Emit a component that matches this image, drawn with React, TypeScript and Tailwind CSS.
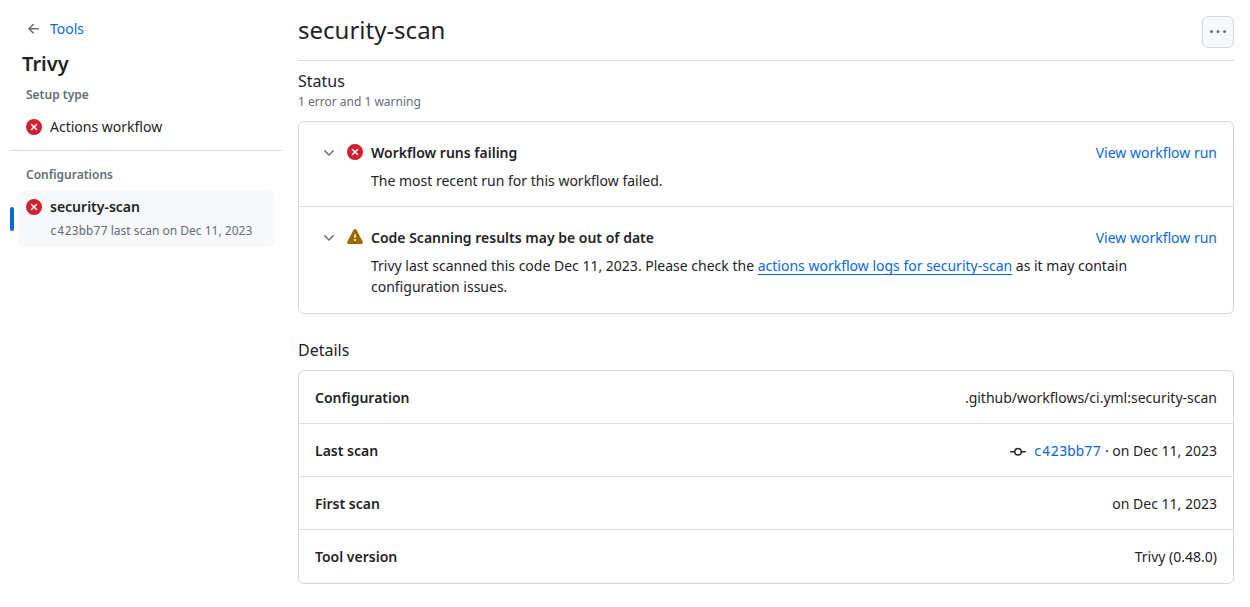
import type { ReactNode } from "react";

const paths = {
  arrowLeft:
    "M7.78 12.53a.75.75 0 0 1-1.06 0L2.47 8.28a.75.75 0 0 1 0-1.06l4.25-4.25a.751.751 0 0 1 1.042.018.751.751 0 0 1 .018 1.042L4.81 7h7.44a.75.75 0 0 1 0 1.5H4.81l2.97 2.97a.75.75 0 0 1 0 1.06Z",
  xCircleFill:
    "M2.343 13.657A8 8 0 1 1 13.658 2.343 8 8 0 0 1 2.343 13.657ZM6.03 4.97a.751.751 0 0 0-1.042.018.751.751 0 0 0-.018 1.042L6.94 8 4.97 9.97a.749.749 0 0 0 .326 1.275.749.749 0 0 0 .734-.215L8 9.06l1.97 1.97a.749.749 0 0 0 1.275-.326.749.749 0 0 0-.215-.734L9.06 8l1.97-1.97a.749.749 0 0 0-.326-1.275.749.749 0 0 0-.734.215L8 6.94Z",
  alertFill:
    "M6.457 1.047c.659-1.234 2.427-1.234 3.086 0l6.082 11.378A1.75 1.75 0 0 1 14.082 15H1.918a1.75 1.75 0 0 1-1.543-2.575ZM8 5a.75.75 0 0 0-.75.75v2.5a.75.75 0 0 0 1.5 0v-2.5A.75.75 0 0 0 8 5Zm1 6a1 1 0 1 0-2 0 1 1 0 0 0 2 0Z",
  chevronDown:
    "M12.78 5.22a.749.749 0 0 1 0 1.06l-4.25 4.25a.749.749 0 0 1-1.06 0L3.22 6.28a.749.749 0 1 1 1.06-1.06L8 8.939l3.72-3.719a.749.749 0 0 1 1.06 0Z",
  gitCommit:
    "M11.93 8.5a4.002 4.002 0 0 1-7.86 0H.75a.75.75 0 0 1 0-1.5h3.32a4.002 4.002 0 0 1 7.86 0h3.32a.75.75 0 0 1 0 1.5Zm-1.43-.75a2.5 2.5 0 1 0-5 0 2.5 2.5 0 0 0 5 0Z",
  kebab:
    "M8 9a1.5 1.5 0 1 0 0-3 1.5 1.5 0 0 0 0 3ZM1.5 9a1.5 1.5 0 1 0 0-3 1.5 1.5 0 0 0 0 3Zm13 0a1.5 1.5 0 1 0 0-3 1.5 1.5 0 0 0 0 3Z",
};

function Icon({ name, className }: { name: keyof typeof paths; className: string }) {
  return (
    <svg viewBox="0 0 16 16" aria-hidden="true" className={`size-4 shrink-0 fill-current ${className}`}>
      <path d={paths[name]} />
    </svg>
  );
}

const mono = "font-['Noto_Sans_Mono','DejaVu_Sans_Mono',monospace]";

function StatusItem({ icon, title, children }: { icon: ReactNode; title: string; children: ReactNode }) {
  return (
    <li className="flex items-start border-b border-[#d8dee4] pt-5 pr-4 pb-[15px] pl-[22px] last:border-b-0 last:pb-4">
      <button type="button" aria-label={`Toggle ${title}`} className="flex h-[21px] items-center text-[#656d76]">
        <Icon name="chevronDown" className="" />
      </button>
      <span className="ml-2.5 flex h-5 items-center">{icon}</span>
      <div className="ml-2 min-w-0 flex-1">
        <div className="flex justify-between gap-4">
          <h3 className="font-semibold">{title}</h3>
          <a href="#run" className="text-[#0969da]">
            View workflow run
          </a>
        </div>
        <p className="mt-[7px] max-w-[768px]">{children}</p>
      </div>
    </li>
  );
}

function DetailRow({ label, children }: { label: string; children: ReactNode }) {
  return (
    <div className="flex min-h-[53px] items-center justify-between gap-4 border-b border-[#d8dee4] px-4 last:border-b-0">
      <dt className="font-semibold">{label}</dt>
      <dd className="flex items-center">{children}</dd>
    </div>
  );
}

export default function App() {
  return (
    <div className="flex min-h-screen gap-4 bg-white pr-4 pl-2.5 font-['Noto_Sans',sans-serif] text-[14px] leading-[21px] text-[#1f2328]">
      <aside className="w-[272px] shrink-0 pt-[18px]">
        <a href="#tools" className="ml-4 flex w-fit items-center gap-2 text-[#0969da]">
          <Icon name="arrowLeft" className="text-[#656d76]" />
          Tools
        </a>
        <h1 className="mt-2.5 ml-3 text-[20px] leading-[30px] font-semibold">Trivy</h1>
        <nav aria-label="Tool setup">
          <h2 className="mt-[7px] ml-4 text-[12px] leading-[18px] font-semibold text-[#656d76]">Setup type</h2>
          <a href="#setup" className="mt-3 ml-4 flex items-center gap-2">
            <Icon name="xCircleFill" className="text-[#cf222e]" />
            Actions workflow
          </a>
          <hr className="mt-[13px] border-[#d8dee4]" />
          <h2 className="mt-[15px] ml-4 text-[12px] leading-[18px] font-semibold text-[#656d76]">Configurations</h2>
          <div className="mt-[7px] flex items-center gap-1">
            <span className="h-6 w-1 rounded-full bg-[#0969da]" />
            <a
              href="#security-scan"
              aria-current="page"
              className="mr-2 flex h-14 flex-1 items-start gap-2 rounded-md bg-[#f6f8fa] px-2 pt-[5px]"
            >
              <span className="flex h-[21px] items-center">
                <Icon name="xCircleFill" className="text-[#cf222e]" />
              </span>
              <span className="flex flex-col gap-[5px]">
                <span className="font-semibold">security-scan</span>
                <span className="text-[12px] leading-[18px] text-[#656d76]">
                  <span className={mono}>c423bb77</span> last scan on Dec 11, 2023
                </span>
              </span>
            </a>
          </div>
        </nav>
      </aside>

      <main className="min-w-0 flex-1 pb-6">
        <header className="flex items-start justify-between border-b border-[#d8dee4] pt-4 pb-3">
          <h1 className="text-[24px] leading-7">security-scan</h1>
          <button
            type="button"
            aria-label="More options"
            className="flex size-8 items-center justify-center rounded-md border border-[#d0d7de] bg-[#f6f8fa] text-[#656d76]"
          >
            <Icon name="kebab" className="" />
          </button>
        </header>

        <section className="pt-2">
          <h2 className="text-[16px] leading-6">Status</h2>
          <p className="text-[12px] leading-[18px] text-[#656d76]">1 error and 1 warning</p>
          <ul className="mt-2.5 rounded-md border border-[#d0d7de]">
            <StatusItem icon={<Icon name="xCircleFill" className="text-[#cf222e]" />} title="Workflow runs failing">
              The most recent run for this workflow failed.
            </StatusItem>
            <StatusItem
              icon={<Icon name="alertFill" className="text-[#9a6700]" />}
              title="Code Scanning results may be out of date"
            >
              Trivy last scanned this code Dec 11, 2023. Please check the{" "}
              <a
                href="#logs"
                className="text-[#0969da] underline decoration-1 underline-offset-3 [text-decoration-skip-ink:none]"
              >
                actions workflow logs for security-scan
              </a>{" "}
              as it may contain configuration issues.
            </StatusItem>
          </ul>
        </section>

        <section className="mt-6">
          <h2 className="text-[16px] leading-6">Details</h2>
          <dl className="mt-2 rounded-md border border-[#d0d7de]">
            <DetailRow label="Configuration">.github/workflows/ci.yml:security-scan</DetailRow>
            <DetailRow label="Last scan">
              <Icon name="gitCommit" className="mt-1 mr-2" />
              <a href="#commit" className={`${mono} text-[#0969da]`}>
                c423bb77
              </a>
              <span className="ml-1">· on Dec 11, 2023</span>
            </DetailRow>
            <DetailRow label="First scan">on Dec 11, 2023</DetailRow>
            <DetailRow label="Tool version">Trivy (0.48.0)</DetailRow>
          </dl>
        </section>
      </main>
    </div>
  );
}
